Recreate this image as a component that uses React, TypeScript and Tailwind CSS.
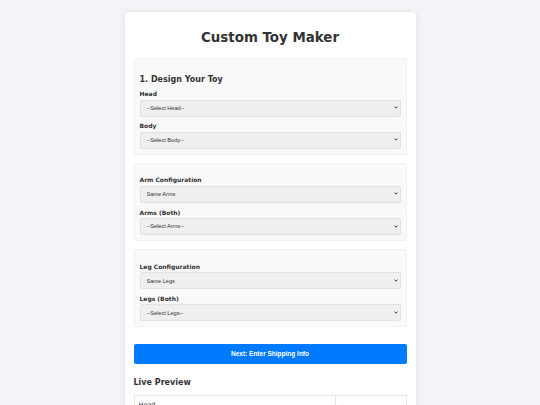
import { useState } from 'react'

const heading = "font-['DejaVu_Sans',sans-serif] font-bold text-[#333]"

function Field({ label, value, options }: { label: string; value: string; options: string[] }) {
  const [v, setV] = useState(value)
  return (
    <div>
      <label className={`${heading} block text-[6px] leading-[8px] mb-[1.5px]`}>{label}</label>
      <div className="relative">
        <select
          value={v}
          onChange={(e) => setV(e.target.value)}
          className="block w-full h-[17px] appearance-none pl-[6px] pr-[10px] text-[5.6px] text-[#333] bg-[#efefef] border border-[#e2e2e2] rounded-[2px] font-['Liberation_Sans',Arial,sans-serif] outline-none"
        >
          {options.map((o) => (
            <option key={o}>{o}</option>
          ))}
        </select>
        <svg
          viewBox="0 0 8 6"
          className="pointer-events-none absolute right-[3px] top-[6.5px] w-[4px] h-[3px]"
        >
          <path d="M1 1.2 L4 4.4 L7 1.2" fill="none" stroke="#222" strokeWidth="1.8" />
        </svg>
      </div>
    </div>
  )
}

const section = 'bg-[#f9f9f9] border border-[#f1f1f1] rounded-[3px] px-[5px] pb-[5px]'

export default function App() {
  return (
    <div className="min-h-[405px] bg-[#f4f4f8] pt-[12px] overflow-hidden">
      <div className="mx-auto w-[291px] bg-white rounded-[4px] shadow-[0_0_6px_rgba(0,0,0,0.08)] px-[9px] pt-[18px] pb-[20px]">
        <h1 className={`${heading} text-[13.4px] leading-[16px] text-center mb-[12px]`}>Custom Toy Maker</h1>

        <div className="flex flex-col gap-[8px]">
          <div className={`${section} pt-[16px]`}>
            <h2 className={`${heading} text-[8px] leading-[10px] mb-[5px]`}>1. Design Your Toy</h2>
            <div className="flex flex-col gap-[5.7px]">
              <Field label="Head" value="--Select Head--" options={['--Select Head--']} />
              <Field label="Body" value="--Select Body--" options={['--Select Body--']} />
            </div>
          </div>

          <div className={`${section} pt-[12.7px]`}>
            <div className="flex flex-col gap-[5.7px]">
              <Field label="Arm Configuration" value="Same Arms" options={['Same Arms', 'Different Arms']} />
              <Field label="Arms (Both)" value="--Select Arms--" options={['--Select Arms--']} />
            </div>
          </div>

          <div className={`${section} pt-[12.7px]`}>
            <div className="flex flex-col gap-[5.7px]">
              <Field label="Leg Configuration" value="Same Legs" options={['Same Legs', 'Different Legs']} />
              <Field label="Legs (Both)" value="--Select Legs--" options={['--Select Legs--']} />
            </div>
          </div>
        </div>

        <button className="mt-[16.6px] w-full h-[20px] bg-[#007bff] text-white rounded-[2px] text-[6.5px] font-bold font-['Liberation_Sans',Arial,sans-serif]">
          Next: Enter Shipping Info
        </button>

        <h2 className={`${heading} text-[8px] leading-[10px] mt-[14px] mb-[7px]`}>Live Preview</h2>
        <table className="w-full border-collapse text-[6.5px] text-[#333] font-['DejaVu_Sans',sans-serif]">
          <tbody>
            <tr>
              <td className="border border-[#e6e6e6] px-[4px] py-[5px] w-[201px]">Head</td>
              <td className="border border-[#e6e6e6] px-[4px] py-[5px]">---</td>
            </tr>
            <tr>
              <td className="border border-[#e6e6e6] px-[4px] py-[5px]">Body</td>
              <td className="border border-[#e6e6e6] px-[4px] py-[5px]">---</td>
            </tr>
          </tbody>
        </table>
      </div>
    </div>
  )
}
